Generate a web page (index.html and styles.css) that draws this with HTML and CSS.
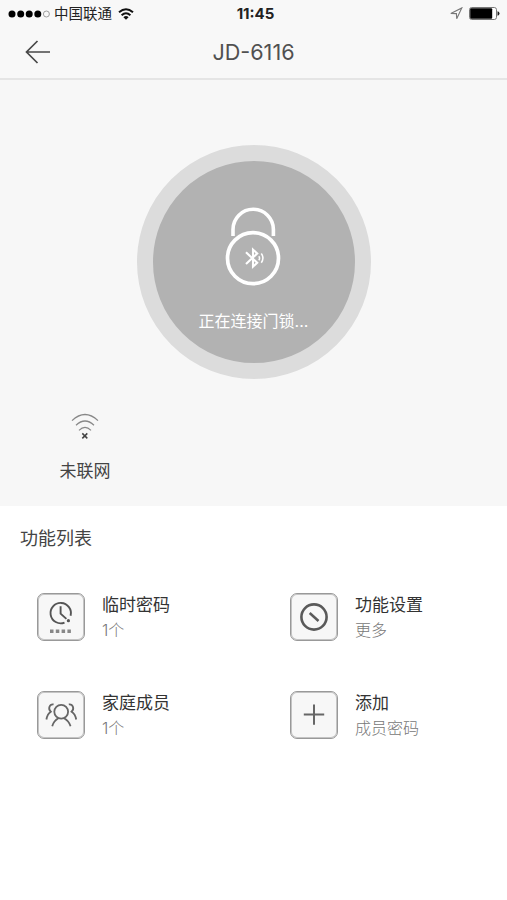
FILE: index.html
```html
<!DOCTYPE html>
<html lang="zh-CN">
<head>
<meta charset="utf-8">
<title>JD-6116</title>
<link rel="stylesheet" href="styles.css">
</head>
<body>
<header class="top">
  <div class="status">
    <div class="carrier">
      <svg class="signal" width="42" height="10" viewBox="0 0 42 10"><g fill="#000"><circle cx="4" cy="5" r="3.5"/><circle cx="12.7" cy="5" r="3.5"/><circle cx="21.2" cy="5" r="3.5"/><circle cx="29.8" cy="5" r="3.5"/></g><circle cx="38.4" cy="5" r="3" fill="none" stroke="#888" stroke-width=".8"/></svg>
      <span class="carrier-name">中国联通</span>
      <svg class="wifi" width="16" height="12" viewBox="0 0 16 12" fill="none" stroke="#111" stroke-width="2"><path d="M1 4.3Q8-1.7 15 4.3"/><path d="M3.6 7.2Q8 3.2 12.4 7.2"/><path d="M5.4 9.2Q8 7 10.6 9.2L8 11.7Z" fill="#111" stroke="none"/></svg>
    </div>
    <time class="clock">11:45</time>
    <div class="power">
      <svg width="13" height="13" viewBox="0 0 13 13" fill="none" stroke="#777" stroke-width="1.1"><path d="M.8 6.5 11.8.9 6.7 11.8 6.4 6.6Z"/></svg>
      <svg width="31" height="13" viewBox="0 0 31 13"><rect x=".5" y=".5" width="27" height="12" rx="2.2" fill="#fff" stroke="#777"/><rect x="1.2" y="1.2" width="22" height="10.6" rx="1" fill="#000"/><path d="M28.5 4.2q2 .3 2 2.3t-2 2.3z" fill="#222"/></svg>
    </div>
  </div>
  <nav class="nav">
    <svg class="back" width="26" height="24" viewBox="0 0 26 24" fill="none" stroke="#484848" stroke-width="1.7"><path d="M25 12H1.5M12.5 1 1.5 12l11 11"/></svg>
    <h1 class="title">JD-6116</h1>
  </nav>
</header>
<section class="device">
  <div class="dial">
    <svg class="lock" width="56" height="80" viewBox="0 0 56 80" fill="none" stroke="#fff"><path d="M8 29V22.5a20.2 20.2 0 0 1 40.4 0V29" stroke-width="3.6"/><circle cx="28" cy="51.2" r="25.5" stroke-width="3.7"/><path d="M21 45.3 32.2 55.8 28 59.7V42.6L32.2 46.5 21 57" stroke-width="2.1"/><path d="M33.8 49.2q1.5 2 0 4M36.3 46.5q3.3 4.6 0 9.2" stroke-width="1.5"/></svg>
    <p class="dial-text">正在连接门锁...</p>
  </div>
  <div class="network">
    <svg width="28" height="27" viewBox="0 0 28 27" fill="none" stroke="#888" stroke-width="1.2"><path d="M1 7.6Q14-4.6 27 7.6"/><path d="M5 12.2Q14 3.8 23 12.2"/><path d="M8 17.4Q14 11.4 20 17.4"/><path d="m11.3 20.4 5 5m0-5-5 5" stroke="#444" stroke-width="1.5"/></svg>
    <span class="network-text">未联网</span>
  </div>
</section>
<main class="features">
  <h2 class="heading">功能列表</h2>
  <div class="grid">
    <div class="item">
      <div class="tile"><svg width="46" height="46" viewBox="0 0 46 46" fill="none" stroke="#555" stroke-width="1.9"><path d="M26.5 28.6A10.2 10.2 0 1 1 32.6 21.7"/><path d="M22.6 12.3v7.4l5.8 5.2"/><circle cx="30.4" cy="26.7" r="1.6" fill="#555" stroke="none"/><path d="M12 37.2h3.5m2.3 0h3.5m2.3 0h3.5m2.3 0h3.5" stroke="#888" stroke-width="3.4"/></svg></div>
      <div class="label"><b>临时密码</b><span>1个</span></div>
    </div>
    <div class="item">
      <div class="tile"><svg width="46" height="46" viewBox="0 0 46 46" fill="none" stroke="#5a5a5a"><circle cx="23" cy="23" r="12.6" stroke-width="2.6"/><path d="m18.7 19 8.8 8" stroke-width="2.5"/></svg></div>
      <div class="label"><b>功能设置</b><span>更多</span></div>
    </div>
    <div class="item">
      <div class="tile"><svg width="46" height="46" viewBox="0 0 46 46" fill="none" stroke="#666" stroke-width="1.8"><circle cx="23.2" cy="19.7" r="6.9"/><path d="M14.2 34.2Q15.8 29 20.3 26.3M26.1 26.3Q30.8 29 32.6 34.2M15.6 12.4C11.4 11.8 9.7 16.7 12.8 19.7Q9.3 22 8.4 27.5M30.8 12.4C35 11.8 36.7 16.7 33.6 19.7Q37.3 22 38.2 27.5"/></svg></div>
      <div class="label"><b>家庭成员</b><span>1个</span></div>
    </div>
    <div class="item">
      <div class="tile"><svg width="46" height="46" viewBox="0 0 46 46" fill="none" stroke="#666" stroke-width="2"><path d="M12.8 22.6h20.4M23 12.4v20.4"/></svg></div>
      <div class="label"><b>添加</b><span>成员密码</span></div>
    </div>
  </div>
</main>
</body>
</html>
```
FILE: styles.css
```css
* { box-sizing: border-box; margin: 0; padding: 0; }
body {
  width: 507px;
  height: 900px;
  overflow: hidden;
  background: #fff;
  color: #444;
  font-family: Inter, "Noto Sans CJK SC", sans-serif;
}
svg { display: block; flex: none; }
.top { height: 80px; background: #f8f8f8; border-bottom: 2px solid #e5e5e5; }
.status {
  display: grid;
  grid-template-columns: 1fr auto 1fr;
  align-items: center;
  height: 27px;
  padding: 0 7px 0 8px;
}
.carrier { display: flex; align-items: center; }
.carrier-name { margin-left: 4px; font-size: 14.5px; line-height: 20px; color: #222; }
.wifi { margin-left: 6px; }
.clock { padding-left: 3px; font-size: 15px; line-height: 20px; font-weight: 700; color: #222; }
.power { display: flex; align-items: center; justify-content: flex-end; gap: 6px; }
.nav {
  display: grid;
  grid-template-columns: 26px 1fr 26px;
  align-items: center;
  height: 50px;
  padding: 0 25px;
}
.title { font-size: 21.6px; font-weight: 400; line-height: 26px; text-align: center; color: #505050; }
.device { height: 426px; padding-top: 65px; background: #f7f7f7; }
.dial {
  display: flex;
  flex-direction: column;
  align-items: center;
  width: 234px;
  height: 234px;
  margin: 0 auto;
  padding-top: 46px;
  border: 16px solid #dcdcdc;
  border-radius: 50%;
  background: #b2b2b2;
}
.lock { margin-right: 2px; }
.dial-text { margin-top: 22px; font-size: 16px; line-height: 24px; color: #fff; }
.network {
  display: flex;
  flex-direction: column;
  align-items: center;
  width: 70px;
  margin: 34px 0 0 50px;
}
.network-text { margin-top: 19px; font-size: 17px; line-height: 24px; }
.features { padding: 20px; }
.heading { font-size: 18px; line-height: 26px; font-weight: 400; }
.grid {
  display: grid;
  grid-template-columns: 253px 1fr;
  row-gap: 50px;
  padding: 41px 0 0 17px;
}
.item { display: flex; gap: 18px; height: 48px; }
.tile {
  width: 48px;
  height: 48px;
  border: 1px solid #999;
  border-radius: 7px;
  background: #f7f7f7;
  box-shadow: inset 0 0 0 1px #c4c4c4;
}
.label { display: flex; flex-direction: column; margin: -1px 0 0 -1px; }
.label b { font-size: 17px; line-height: 26px; font-weight: 400; color: #333; }
.label span { font-size: 16px; line-height: 24px; font-weight: 300; color: #777; }
```
